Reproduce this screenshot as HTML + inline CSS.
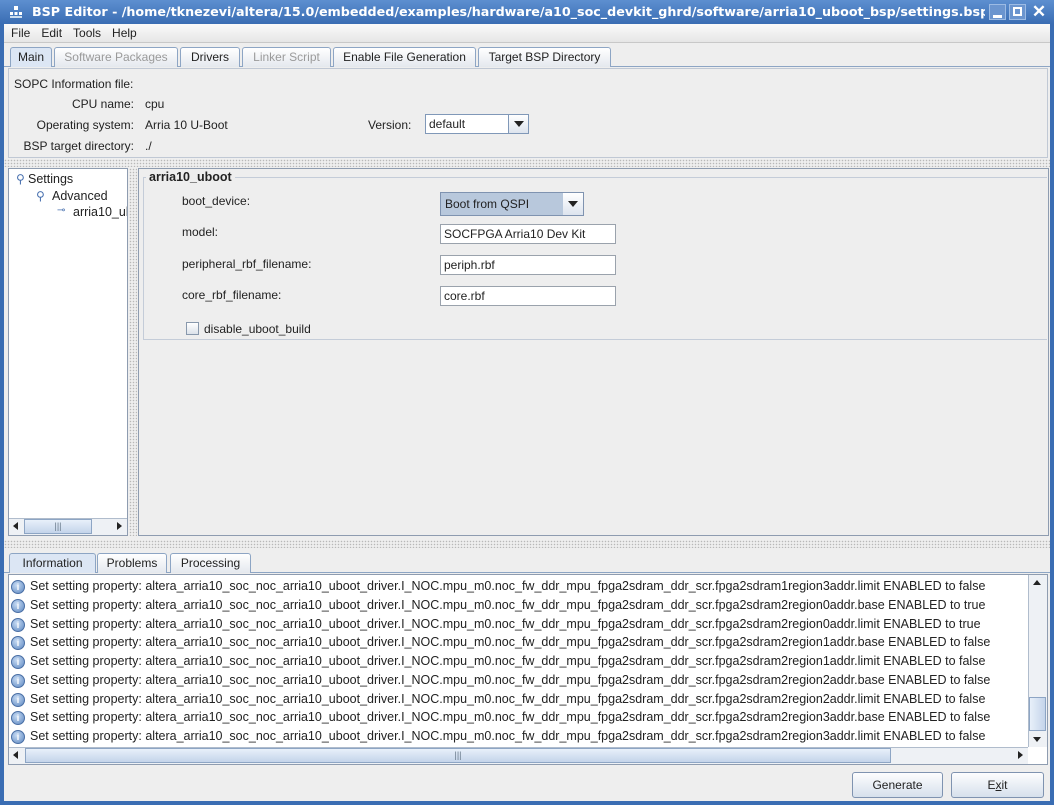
<!DOCTYPE html>
<html><head><meta charset="utf-8"><style>
*{box-sizing:border-box;margin:0;padding:0}
body{width:1054px;height:805px;position:relative;overflow:hidden;background:#3a6db3;font-family:"Liberation Sans","DejaVu Sans",sans-serif;font-size:12px;color:#222}
.a{position:absolute}
.title{left:0;top:0;width:985px;height:24px;overflow:hidden;background:linear-gradient(#5d8fd0,#3a6db3);color:#fff;font:bold 12.7px "DejaVu Sans",sans-serif;line-height:24px;padding-left:32px;white-space:nowrap}
.win{left:4px;top:24px;width:1046px;height:777px;background:#eeeeee}
.menu{left:4px;top:24px;width:1046px;height:19px;background:linear-gradient(#fafafa,#e6e6e6);border-bottom:1px solid #c8c8c8}
.menu span{margin-left:7px;margin-right:4px;line-height:19px}
.tab{height:20px;border:1px solid #8da5c4;border-bottom:none;background:linear-gradient(#fff,#e4e8ee);line-height:19px;text-align:center;border-radius:3px 3px 0 0;white-space:nowrap}
.tab.sel{background:#dce6f4}
.tab.dis{color:#9a9a9a}
.box{border:1px solid #9aaac0;background:#eeeeee}
.lbl{text-align:right;white-space:nowrap}
.dots{background-image:radial-gradient(#b8b8b8 0.6px,transparent 0.9px);background-size:3px 3px}
.field{background:#fff;border:1px solid #9aa2ac;padding-left:3px;line-height:19px;height:20px;white-space:nowrap}
.log{white-space:nowrap;left:30px;font-size:12.5px}
.ic{left:11px;width:14px;height:14px;border-radius:50%;background:radial-gradient(circle at 40% 35%,#c8dcf4,#5b86c0);border:1px solid #4a6fa5;color:#fff;font-size:9px;font-weight:bold;text-align:center;line-height:12px}
.btn{border:1px solid #7f93b0;border-radius:3px;background:linear-gradient(#fdfdfe,#d6e0ec);text-align:center;line-height:24px}
.arrow{width:0;height:0;border-left:5px solid transparent;border-right:5px solid transparent;border-top:6px solid #222}
</style></head><body>
<div class="a" style="left:0;top:0;width:1054px;height:24px;background:linear-gradient(#5d8fd0,#3a6db3)"></div>
<div class="a title">BSP Editor - /home/tknezevi/altera/15.0/embedded/examples/hardware/a10_soc_devkit_ghrd/software/arria10_uboot_bsp/settings.bsp</div>
<svg class="a" style="left:9px;top:6px" width="14" height="13"><rect x="5" y="0" width="4" height="4" fill="#fff"/><rect x="1" y="6" width="3" height="3" fill="#fff"/><rect x="5.5" y="6" width="3" height="3" fill="#fff"/><rect x="10" y="6" width="3" height="3" fill="#fff"/><rect x="1" y="10" width="12" height="2" fill="#cde"/></svg>
<div class="a" style="left:989px;top:4px;width:17px;height:16px;background:#6b95cf;border:1px solid #9cbbe4"><div class="a" style="left:3px;top:10px;width:9px;height:3px;background:#fff"></div></div>
<div class="a" style="left:1009px;top:4px;width:17px;height:16px;background:#6b95cf;border:1px solid #9cbbe4"><div class="a" style="left:3px;top:2px;width:9px;height:9px;border:2px solid #fff"></div></div>
<div class="a" style="left:1029px;top:2px;width:20px;height:20px;color:#fff;font:bold 17px sans-serif;text-align:center">✕</div>
<div class="a win"></div>
<div class="a menu"><span>File</span><span>Edit</span><span>Tools</span><span>Help</span></div>
<div class="a" style="left:4px;top:66px;width:1046px;height:1px;background:#8da5c4"></div>
<div class="a tab sel" style="left:10px;top:47px;width:42px">Main</div>
<div class="a tab dis" style="left:54px;top:47px;width:124px">Software Packages</div>
<div class="a tab" style="left:180px;top:47px;width:60px">Drivers</div>
<div class="a tab dis" style="left:242px;top:47px;width:89px">Linker Script</div>
<div class="a tab" style="left:333px;top:47px;width:143px">Enable File Generation</div>
<div class="a tab" style="left:478px;top:47px;width:133px">Target BSP Directory</div>
<div class="a box" style="left:8px;top:68px;width:1040px;height:90px;border-color:#c0c8d4"></div>
<div class="a" style="left:14px;top:77px">SOPC Information file:</div>
<div class="a lbl" style="left:0;width:134px;top:97px">CPU name:</div><div class="a" style="left:145px;top:97px">cpu</div>
<div class="a lbl" style="left:0;width:134px;top:118px">Operating system:</div><div class="a" style="left:145px;top:118px">Arria 10 U-Boot</div>
<div class="a lbl" style="left:0;width:134px;top:139px">BSP target directory:</div><div class="a" style="left:145px;top:139px">./</div>
<div class="a" style="left:368px;top:118px">Version:</div>
<div class="a field" style="left:425px;top:114px;width:104px;border-color:#8098b8;background:#fff">default</div>
<div class="a" style="left:508px;top:115px;width:20px;height:18px;background:linear-gradient(#fff,#dde4ee);border-left:1px solid #8098b8"><div class="a arrow" style="left:5px;top:6px"></div></div>
<div class="a dots" style="left:4px;top:159px;width:1046px;height:8px"></div>
<div class="a" style="left:8px;top:168px;width:120px;height:368px;background:#fff;border:1px solid #8e9cb0"></div>
<div class="a" style="left:16px;top:172px;color:#4a72b0">⚲</div>
<div class="a" style="left:28px;top:172px;font-size:12.5px">Settings</div>
<div class="a" style="left:36px;top:189px;color:#4a72b0">⚲</div>
<div class="a" style="left:52px;top:189px;font-size:12.5px">Advanced</div>
<div class="a" style="left:57px;top:205px;color:#4a72b0;font-size:10px">⊸</div>
<div class="a" style="left:73px;top:205px;font-size:12.5px;width:54px;overflow:hidden;white-space:nowrap">arria10_uboot</div>
<div class="a" style="left:9px;top:518px;width:118px;height:17px;background:#eef1f5;border-top:1px solid #b0bccc"></div>
<div class="a" style="left:24px;top:519px;width:68px;height:15px;background:linear-gradient(#e8f0fa,#c4d4ea);border:1px solid #8da5c4;text-align:center;font-size:9px;line-height:13px;color:#678">|||</div>
<div class="a" style="left:13px;top:522px;border-top:4px solid transparent;border-bottom:4px solid transparent;border-right:5px solid #222"></div>
<div class="a" style="left:117px;top:522px;border-top:4px solid transparent;border-bottom:4px solid transparent;border-left:5px solid #222"></div>
<div class="a dots" style="left:129px;top:168px;width:8px;height:368px"></div>
<div class="a" style="left:138px;top:168px;width:911px;height:368px;border:1px solid #8e9cb0;background:#eeeeee"></div>
<div class="a" style="left:143px;top:177px;width:904px;height:163px;border:1px solid #c4ccd8;border-right:none"></div>
<div class="a" style="left:146px;top:170px;background:#eeeeee;padding:0 3px;font-weight:bold;font-size:12.5px">arria10_uboot</div>
<div class="a" style="left:182px;top:194px">boot_device:</div>
<div class="a" style="left:182px;top:225px">model:</div>
<div class="a" style="left:182px;top:257px">peripheral_rbf_filename:</div>
<div class="a" style="left:182px;top:288px">core_rbf_filename:</div>
<div class="a" style="left:440px;top:192px;width:144px;height:24px;border:1px solid #7f93b0;background:#b8c8dc"></div>
<div class="a" style="left:445px;top:197px">Boot from QSPI</div>
<div class="a" style="left:563px;top:193px;width:20px;height:22px;background:linear-gradient(#fff,#dde4ee)"><div class="a arrow" style="left:5px;top:8px"></div></div>
<div class="a field" style="left:440px;top:224px;width:176px">SOCFPGA Arria10 Dev Kit</div>
<div class="a field" style="left:440px;top:255px;width:176px">periph.rbf</div>
<div class="a field" style="left:440px;top:286px;width:176px">core.rbf</div>
<div class="a" style="left:186px;top:322px;width:13px;height:13px;border:1px solid #8898ac;background:linear-gradient(#fff,#dce2ea)"></div>
<div class="a" style="left:204px;top:322px">disable_uboot_build</div>
<div class="a dots" style="left:4px;top:540px;width:1046px;height:8px"></div>
<div class="a" style="left:4px;top:572px;width:1046px;height:1px;background:#8da5c4"></div>
<div class="a tab sel" style="left:9px;top:553px;width:87px">Information</div>
<div class="a tab" style="left:97px;top:553px;width:70px">Problems</div>
<div class="a tab" style="left:170px;top:553px;width:81px">Processing</div>
<div class="a" style="left:8px;top:574px;width:1040px;height:191px;background:#fff;border:1px solid #8e9cb0"></div>
<div class="a ic" style="top:580px">i</div><div class="a log" style="top:579px">Set setting property: altera_arria10_soc_noc_arria10_uboot_driver.I_NOC.mpu_m0.noc_fw_ddr_mpu_fpga2sdram_ddr_scr.fpga2sdram1region3addr.limit ENABLED to false</div>
<div class="a ic" style="top:599px">i</div><div class="a log" style="top:598px">Set setting property: altera_arria10_soc_noc_arria10_uboot_driver.I_NOC.mpu_m0.noc_fw_ddr_mpu_fpga2sdram_ddr_scr.fpga2sdram2region0addr.base ENABLED to true</div>
<div class="a ic" style="top:618px">i</div><div class="a log" style="top:617px">Set setting property: altera_arria10_soc_noc_arria10_uboot_driver.I_NOC.mpu_m0.noc_fw_ddr_mpu_fpga2sdram_ddr_scr.fpga2sdram2region0addr.limit ENABLED to true</div>
<div class="a ic" style="top:636px">i</div><div class="a log" style="top:635px">Set setting property: altera_arria10_soc_noc_arria10_uboot_driver.I_NOC.mpu_m0.noc_fw_ddr_mpu_fpga2sdram_ddr_scr.fpga2sdram2region1addr.base ENABLED to false</div>
<div class="a ic" style="top:655px">i</div><div class="a log" style="top:654px">Set setting property: altera_arria10_soc_noc_arria10_uboot_driver.I_NOC.mpu_m0.noc_fw_ddr_mpu_fpga2sdram_ddr_scr.fpga2sdram2region1addr.limit ENABLED to false</div>
<div class="a ic" style="top:674px">i</div><div class="a log" style="top:673px">Set setting property: altera_arria10_soc_noc_arria10_uboot_driver.I_NOC.mpu_m0.noc_fw_ddr_mpu_fpga2sdram_ddr_scr.fpga2sdram2region2addr.base ENABLED to false</div>
<div class="a ic" style="top:693px">i</div><div class="a log" style="top:692px">Set setting property: altera_arria10_soc_noc_arria10_uboot_driver.I_NOC.mpu_m0.noc_fw_ddr_mpu_fpga2sdram_ddr_scr.fpga2sdram2region2addr.limit ENABLED to false</div>
<div class="a ic" style="top:711px">i</div><div class="a log" style="top:710px">Set setting property: altera_arria10_soc_noc_arria10_uboot_driver.I_NOC.mpu_m0.noc_fw_ddr_mpu_fpga2sdram_ddr_scr.fpga2sdram2region3addr.base ENABLED to false</div>
<div class="a ic" style="top:730px">i</div><div class="a log" style="top:729px">Set setting property: altera_arria10_soc_noc_arria10_uboot_driver.I_NOC.mpu_m0.noc_fw_ddr_mpu_fpga2sdram_ddr_scr.fpga2sdram2region3addr.limit ENABLED to false</div>
<div class="a" style="left:1028px;top:575px;width:19px;height:172px;background:#eef1f5;border-left:1px solid #b0bccc"></div>
<div class="a" style="left:1029px;top:697px;width:17px;height:34px;background:linear-gradient(90deg,#e8f0fa,#c4d4ea);border:1px solid #8da5c4"></div>
<div class="a" style="left:1033px;top:580px;border-left:4px solid transparent;border-right:4px solid transparent;border-bottom:5px solid #222"></div>
<div class="a" style="left:1033px;top:737px;border-left:4px solid transparent;border-right:4px solid transparent;border-top:5px solid #222"></div>
<div class="a" style="left:9px;top:747px;width:1019px;height:17px;background:#eef1f5;border-top:1px solid #b0bccc"></div>
<div class="a" style="left:25px;top:748px;width:866px;height:15px;background:linear-gradient(#e8f0fa,#c4d4ea);border:1px solid #8da5c4;text-align:center;font-size:9px;line-height:13px;color:#678">|||</div>
<div class="a" style="left:13px;top:751px;border-top:4px solid transparent;border-bottom:4px solid transparent;border-right:5px solid #222"></div>
<div class="a" style="left:1018px;top:751px;border-top:4px solid transparent;border-bottom:4px solid transparent;border-left:5px solid #222"></div>

<div class="a btn" style="left:852px;top:772px;width:91px;height:26px">Generate</div>
<div class="a btn" style="left:951px;top:772px;width:93px;height:26px">E<u>x</u>it</div>
</body></html>
